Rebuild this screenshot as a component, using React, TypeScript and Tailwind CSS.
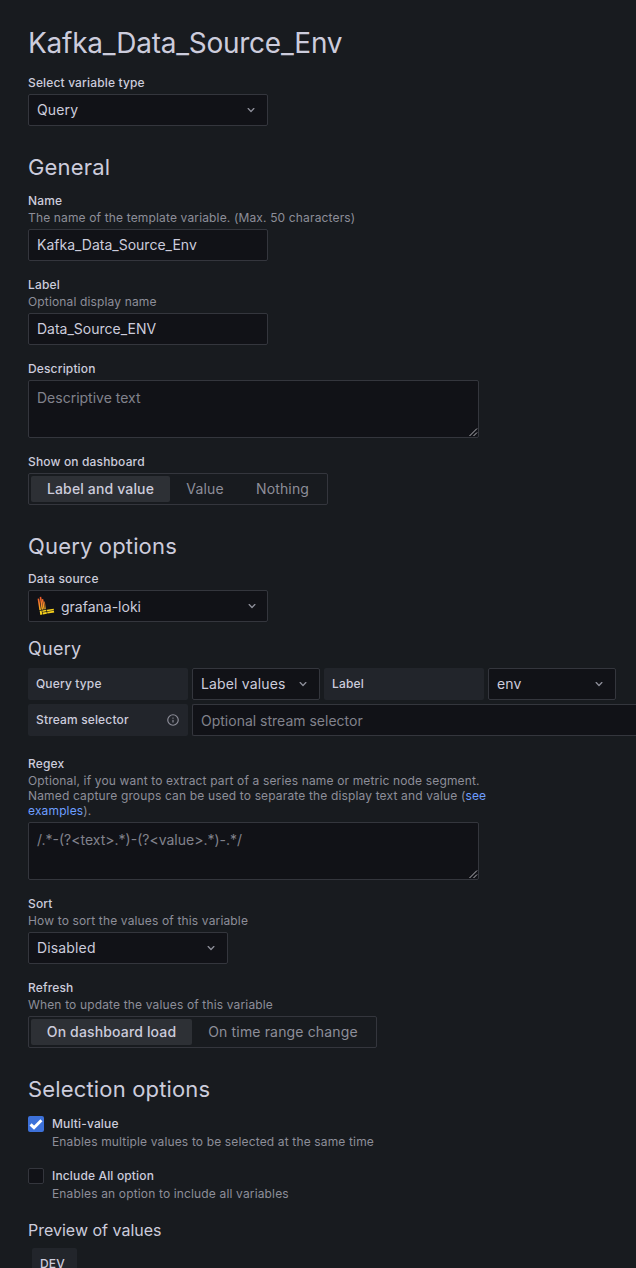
import type { ReactNode } from 'react';

function Chevron() {
  return (
    <svg width="16" height="16" viewBox="0 0 24 24" className="shrink-0" fill="#8d8e99">
      <path d="M17,9.17a1,1,0,0,0-1.41,0L12,12.71,8.46,9.17a1,1,0,0,0-1.41,0,1,1,0,0,0,0,1.42l4.24,4.24a1,1,0,0,0,1.42,0L17,10.59A1,1,0,0,0,17,9.17Z" />
    </svg>
  );
}

function InfoIcon() {
  return (
    <svg width="14" height="14" viewBox="0 0 24 24" fill="#8d8e99">
      <path d="M12,2A10,10,0,1,0,22,12,10.01114,10.01114,0,0,0,12,2Zm0,18a8,8,0,1,1,8-8A8.00917,8.00917,0,0,1,12,20Zm0-8.5a1,1,0,0,0-1,1v3a1,1,0,0,0,2,0v-3A1,1,0,0,0,12,11.5Zm0-4a1.25,1.25,0,1,0,1.25,1.25A1.25,1.25,0,0,0,12,7.5Z" />
    </svg>
  );
}

function LokiLogo() {
  return (
    <svg width="18" height="20" viewBox="0 0 18 20" className="shrink-0">
      <defs>
        <linearGradient id="loki" gradientUnits="userSpaceOnUse" x1="4" y1="0" x2="7" y2="17">
          <stop offset="0" stopColor="#f0502b" />
          <stop offset="0.5" stopColor="#f58a2c" />
          <stop offset="1" stopColor="#fbd912" />
        </linearGradient>
      </defs>
      <g fill="url(#loki)">
        <path d="M.6 2.7 2.2 2.5 4 14 2.4 14.2Z" />
        <path d="M2.7 1 4.2.8 6.1 13.6 4.6 13.8Z" />
        <path d="M4.7 3.2 6.2 3 7.8 13.3 6.5 13.5Z" />
        <path d="M6.7 5.6 7.8 5.4 9 13 8.2 13.2Z" opacity="0.75" />
      </g>
      <g fill="#f8d11c">
        <path d="M2.7 14.9 4.6 14.6 5.2 18.6 3.3 18.9Z" />
        <path d="M5.2 14.4 9.3 13.8 9.5 15.3 5.4 15.9Z" />
        <path d="M5.5 16.5 9.6 15.9 9.9 17.8 5.8 18.5Z" />
        <path d="M9.9 13.8 16.7 12.8 16.9 14.2 10.1 15.2Z" />
        <path d="M10.2 15.8 16.9 14.8 17.2 16.5 10.4 17.6Z" />
      </g>
    </svg>
  );
}

function Select({ children, width, iconPad = 'pr-2' }: { children: ReactNode; width: string; iconPad?: string }) {
  return (
    <div className={`flex h-8 shrink-0 items-center justify-between rounded-xs border border-[#34363d] bg-[#111217] pl-2 ${iconPad} ${width}`}>
      <div className="flex items-center gap-[6px]">{children}</div>
      <Chevron />
    </div>
  );
}

function Field({ label, description, children }: { label: string; description?: ReactNode; children: ReactNode }) {
  return (
    <div className="mb-4">
      <div className="pb-1 text-xs leading-[15px] tracking-[0.15px]">
        <div className="font-medium">{label}</div>
        {description && <div className="mt-[2px] w-[480px] text-[#8d8e99]">{description}</div>}
      </div>
      {children}
    </div>
  );
}

function TextBox({ value }: { value: string }) {
  return (
    <div className="flex h-8 w-60 items-center rounded-xs border border-[#34363d] bg-[#111217] px-2 tracking-normal">{value}</div>
  );
}

function TextArea({ placeholder }: { placeholder: string }) {
  return (
    <div className="flex h-[58px] w-[451px] justify-between rounded-xs border border-[#34363d] bg-[#111217] pt-[6px] pl-2 tracking-normal text-[#81828c]">
      <span>{placeholder}</span>
      <svg width="10" height="10" className="self-end" stroke="#b5b5ba" strokeWidth="1">
        <path d="M1.5 9 9 1.5M5.5 9 9 5.5" />
      </svg>
    </div>
  );
}

function RadioGroup({ options, widths }: { options: string[]; widths: string[] }) {
  return (
    <div className="flex h-8 w-max rounded-xs border border-[#34363d] p-[2px]">
      {options.map((option, i) => (
        <div
          key={option}
          className={`flex h-[26px] items-center justify-center rounded-xs ${widths[i]} ${i === 0 ? 'bg-[#2d3035] font-medium' : 'text-[#8d8e99]'}`}
        >
          {option}
        </div>
      ))}
    </div>
  );
}

function CheckOption({ label, description, checked }: { label: string; description: string; checked?: boolean }) {
  return (
    <div className="flex h-[52px] gap-2">
      {checked ? (
        <div className="flex h-4 w-4 items-center justify-center rounded-xs bg-[#3d71d9]">
          <svg width="14" height="14" viewBox="0 0 14 14" fill="none" stroke="#fff" strokeWidth="3">
            <path d="M1.6 7.4 5 10.7 12.4 3.3" />
          </svg>
        </div>
      ) : (
        <div className="h-4 w-4 rounded-xs border border-[#34363d] bg-[#111217]" />
      )}
      <div className="text-xs tracking-[0.15px]">
        <div className="leading-[15px] font-medium">{label}</div>
        <div className="mt-[3px] leading-[15px] text-[#8d8e99]">{description}</div>
      </div>
    </div>
  );
}

function InlineLabel({ children }: { children: ReactNode }) {
  return (
    <div className="flex h-8 w-40 shrink-0 items-center justify-between rounded-xs bg-[#22252b] px-2 text-xs font-medium tracking-[0.15px]">
      {children}
    </div>
  );
}

export default function App() {
  return (
    <div className="h-[1268px] w-full overflow-hidden bg-[#181b1f] pt-[26px] pl-7 font-['Inter',sans-serif] text-sm leading-[22px] tracking-[0.15px] text-[#ccccdc]">
      <h1 className="mb-[15px] text-[28px] leading-[34px] tracking-[-0.25px]">Kafka_Data_Source_Env</h1>
      <Field label="Select variable type">
        <Select width="w-60">Query</Select>
      </Field>

      <h2 className="mb-[13px] pt-3 text-[22px] leading-[26px] tracking-[0.16px]">General</h2>
      <Field label="Name" description="The name of the template variable. (Max. 50 characters)">
        <TextBox value="Kafka_Data_Source_Env" />
      </Field>
      <Field label="Label" description="Optional display name">
        <TextBox value="Data_Source_ENV" />
      </Field>
      <Field label="Description">
        <TextArea placeholder="Descriptive text" />
      </Field>
      <Field label="Show on dashboard">
        <RadioGroup options={['Label and value', 'Value', 'Nothing']} widths={['w-[139px]', 'w-[70px]', 'w-[85px]']} />
      </Field>

      <h2 className="mb-3 pt-3 text-[22px] leading-[26px] tracking-[0.16px]">Query options</h2>
      <Field label="Data source">
        <Select width="w-60" iconPad="pr-[7px]">
          <LokiLogo />
          <span className="pt-px tracking-normal">grafana-loki</span>
        </Select>
      </Field>
      <h4 className="mb-2 text-lg leading-[22px] tracking-[0.25px]">Query</h4>
      <div className="mb-1 flex gap-1">
        <InlineLabel>Query type</InlineLabel>
        <Select width="w-32">Label values</Select>
        <InlineLabel>Label</InlineLabel>
        <Select width="w-32">env</Select>
      </div>
      <div className="mb-5 flex gap-1">
        <InlineLabel>
          Stream selector
          <InfoIcon />
        </InlineLabel>
        <div className="flex h-8 grow items-center rounded-l-xs border border-r-0 border-[#34363d] bg-[#111217] px-2 pt-px tracking-normal text-[#81828c]">
          Optional stream selector
        </div>
      </div>

      <Field
        label="Regex"
        description={
          <>
            Optional, if you want to extract part of a series name or metric node segment.
            <br />
            Named capture groups can be used to separate the display text and value (
            <span className="text-[#6e9fff]">see examples</span>).
          </>
        }
      >
        <TextArea placeholder="/.*-(?<text>.*)-(?<value>.*)-.*/" />
      </Field>
      <Field label="Sort" description="How to sort the values of this variable">
        <Select width="w-[200px]">Disabled</Select>
      </Field>
      <Field label="Refresh" description="When to update the values of this variable">
        <RadioGroup options={['On dashboard load', 'On time range change']} widths={['w-[161px]', 'w-[182px]']} />
      </Field>

      <h2 className="mb-[14px] pt-3 text-[22px] leading-[26px] tracking-[0.16px]">Selection options</h2>
      <CheckOption label="Multi-value" description="Enables multiple values to be selected at the same time" checked />
      <CheckOption label="Include All option" description="Enables an option to include all variables" />
      <h5 className="mb-2 text-base leading-5 tracking-normal">Preview of values</h5>
      <div className="ml-1 flex h-8 w-[45px] items-center rounded-xs bg-[#22252b] pl-2 text-xs font-medium tracking-[0.15px]">
        DEV
      </div>
    </div>
  );
}
